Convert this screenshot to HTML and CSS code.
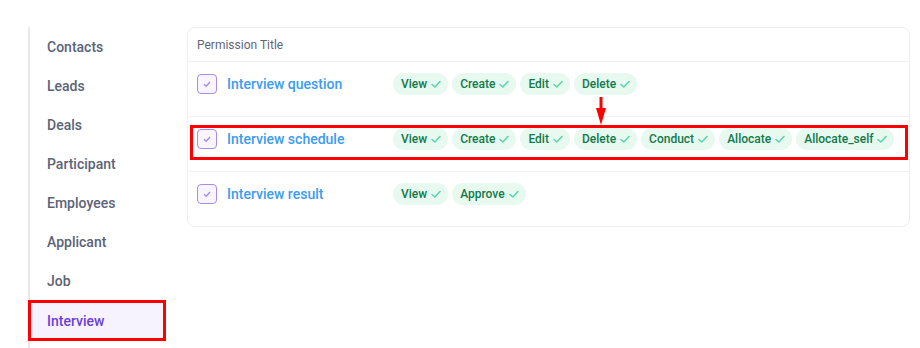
FILE: index.html
```html
<!DOCTYPE html>
<html lang="en">
<head>
    <meta charset="UTF-8">
    <title>Permissions</title>
    <link rel="stylesheet" href="styles.css">
</head>
<body>
    <div class="layout">
        <!-- 左侧模块列表 -->
        <nav class="sidebar">
            <a class="nav-item">Contacts</a>
            <a class="nav-item">Leads</a>
            <a class="nav-item">Deals</a>
            <a class="nav-item">Participant</a>
            <a class="nav-item">Employees</a>
            <a class="nav-item">Applicant</a>
            <a class="nav-item">Job</a>
            <a class="nav-item active">Interview</a>
        </nav>

        <!-- 权限表 -->
        <div class="perm-card">
            <div class="perm-head">Permission Title</div>

            <div class="perm-row">
                <div class="perm-name">
                    <span class="checkbox"><svg viewBox="0 0 12 12"><path d="M3 6.2 L5.2 8.2 L9 4"/></svg></span>
                    <span class="perm-title">Interview question</span>
                </div>
                <div class="badges">
                    <span class="badge">View <svg viewBox="0 0 12 12"><path d="M2 6.5 L4.8 9 L10 3.5"/></svg></span>
                    <span class="badge">Create <svg viewBox="0 0 12 12"><path d="M2 6.5 L4.8 9 L10 3.5"/></svg></span>
                    <span class="badge">Edit <svg viewBox="0 0 12 12"><path d="M2 6.5 L4.8 9 L10 3.5"/></svg></span>
                    <span class="badge">Delete <svg viewBox="0 0 12 12"><path d="M2 6.5 L4.8 9 L10 3.5"/></svg></span>
                </div>
            </div>

            <div class="perm-row">
                <div class="perm-name">
                    <span class="checkbox"><svg viewBox="0 0 12 12"><path d="M3 6.2 L5.2 8.2 L9 4"/></svg></span>
                    <span class="perm-title">Interview schedule</span>
                </div>
                <div class="badges">
                    <span class="badge">View <svg viewBox="0 0 12 12"><path d="M2 6.5 L4.8 9 L10 3.5"/></svg></span>
                    <span class="badge">Create <svg viewBox="0 0 12 12"><path d="M2 6.5 L4.8 9 L10 3.5"/></svg></span>
                    <span class="badge">Edit <svg viewBox="0 0 12 12"><path d="M2 6.5 L4.8 9 L10 3.5"/></svg></span>
                    <span class="badge">Delete <svg viewBox="0 0 12 12"><path d="M2 6.5 L4.8 9 L10 3.5"/></svg></span>
                    <span class="badge">Conduct <svg viewBox="0 0 12 12"><path d="M2 6.5 L4.8 9 L10 3.5"/></svg></span>
                    <span class="badge">Allocate <svg viewBox="0 0 12 12"><path d="M2 6.5 L4.8 9 L10 3.5"/></svg></span>
                    <span class="badge">Allocate_self <svg viewBox="0 0 12 12"><path d="M2 6.5 L4.8 9 L10 3.5"/></svg></span>
                </div>
                <!-- 标注框 -->
                <div class="annot">
                    <svg class="annot-arrow" viewBox="0 0 10 28"><rect x="3.5" y="0" width="3" height="13"/><polygon points="0,11 10,11 5,28"/></svg>
                </div>
            </div>

            <div class="perm-row">
                <div class="perm-name">
                    <span class="checkbox"><svg viewBox="0 0 12 12"><path d="M3 6.2 L5.2 8.2 L9 4"/></svg></span>
                    <span class="perm-title">Interview result</span>
                </div>
                <div class="badges">
                    <span class="badge">View <svg viewBox="0 0 12 12"><path d="M2 6.5 L4.8 9 L10 3.5"/></svg></span>
                    <span class="badge">Approve <svg viewBox="0 0 12 12"><path d="M2 6.5 L4.8 9 L10 3.5"/></svg></span>
                </div>
            </div>
        </div>
    </div>
</body>
</html>
```

FILE: styles.css
```css
/* 全局 */
* {
    margin: 0;
    padding: 0;
    box-sizing: border-box;
}

body {
    background: #ffffff;
    font-family: Roboto, "Noto Sans", "Liberation Sans", sans-serif;
    color: #5c6377;
}

.layout {
    display: flex;
    align-items: flex-start;
    gap: 23px;
    padding: 27px 10px 0 28px;
}

/* 侧边栏 */
.sidebar {
    width: 136px;
    flex-shrink: 0;
    height: 321px;
    border-left: 2px solid #e7e9f0;
    display: flex;
    flex-direction: column;
}

.nav-item {
    height: 39px;
    flex-shrink: 0;
    display: flex;
    align-items: center;
    padding-left: 17px;
    font-size: 14px;
    font-weight: 500;
    color: #5c6377;
}

.nav-item.active {
    height: 37px;
    margin-top: 2px;
    color: #6b3fd6;
    background: #f6f3fe;
    outline: 3px solid #ff0000;
    outline-offset: -1px;
}

/* 权限卡片 */
.perm-card {
    flex: 1;
    border: 1px solid #eceef3;
    border-radius: 8px;
    background: #ffffff;
}

.perm-head {
    height: 34px;
    display: flex;
    align-items: center;
    padding: 0 9px;
    font-size: 12px;
    color: #5f6677;
    border-bottom: 1px solid #f0f1f5;
}

.perm-row {
    position: relative;
    height: 55px;
    display: flex;
    align-items: flex-start;
    padding: 11px 9px 0;
    border-bottom: 1px solid #f1f2f6;
}

.perm-row:last-child {
    height: 54px;
    border-bottom: none;
}

.perm-name {
    width: 196px;
    flex-shrink: 0;
    height: 22px;
    display: flex;
    align-items: center;
    gap: 10px;
}

.checkbox {
    width: 20px;
    height: 20px;
    border: 1.5px solid #a88ce8;
    border-radius: 4px;
    background: #f8f5ff;
    display: flex;
    align-items: center;
    justify-content: center;
}

.checkbox svg {
    width: 12px;
    height: 12px;
    fill: none;
    stroke: #a88ce8;
    stroke-width: 1.4;
}

.perm-title {
    font-size: 14px;
    font-weight: 500;
    color: #3b9cf2;
}

/* 权限标签 */
.badges {
    display: flex;
    gap: 4px;
}

.badge {
    height: 22px;
    display: flex;
    align-items: center;
    gap: 3px;
    padding: 0 6px 0 8px;
    border-radius: 11px;
    background: #e8f9f0;
    font-size: 12px;
    font-weight: 500;
    color: #107a4c;
}

.badge svg {
    width: 12px;
    height: 12px;
    fill: none;
    stroke: #5cd4ad;
    stroke-width: 1.6;
    stroke-linecap: round;
    stroke-linejoin: round;
}

/* 红色标注 */
.annot {
    position: absolute;
    left: 2px;
    right: 1px;
    top: 8px;
    height: 35px;
    border: 3px solid #ff0000;
}

.annot-arrow {
    position: absolute;
    left: 403px;
    top: -31px;
    width: 10px;
    height: 28px;
    fill: #ff0000;
}
```
